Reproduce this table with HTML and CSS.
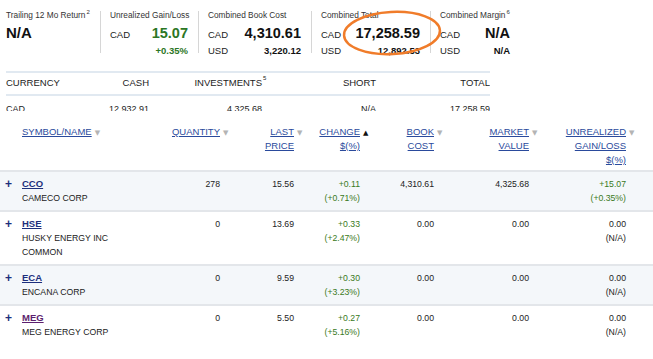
FILE: index.html
```html
<!DOCTYPE html>
<html lang="en">
<head>
  <meta charset="UTF-8" />
  <title>Holdings</title>
  <link rel="stylesheet" href="styles.css">
</head>
<body>
<div class="summary">
  <div class="box box-first">
    <div class="label">Trailing 12 Mo Return<sup>2</sup></div>
    <div class="line"><span class="big">N/A</span></div>
  </div>
  <div class="box box-gain">
    <div class="label">Unrealized Gain/Loss</div>
    <div class="line"><span class="cur">CAD</span><span class="big green">15.07</span></div>
    <div class="line small"><span></span><span class="sm green">+0.35%</span></div>
  </div>
  <div class="box box-book">
    <div class="label">Combined Book Cost</div>
    <div class="line"><span class="cur">CAD</span><span class="big">4,310.61</span></div>
    <div class="line small"><span class="cur">USD</span><span class="sm">3,220.12</span></div>
  </div>
  <div class="box box-total">
    <div class="label">Combined Total</div>
    <div class="line"><span class="cur">CAD</span><span class="big">17,258.59</span></div>
    <div class="line small"><span class="cur">USD</span><span class="sm">12,892.53</span></div>
  </div>
  <div class="box box-margin">
    <div class="label">Combined Margin<sup>6</sup></div>
    <div class="line"><span class="cur">CAD</span><span class="big">N/A</span></div>
    <div class="line small"><span class="cur">USD</span><span class="sm">N/A</span></div>
  </div>
  <!-- hand drawn mark over the total -->
  <svg class="circle" width="110" height="56" viewBox="0 0 110 56">
    <ellipse cx="55" cy="27" rx="48" ry="21" transform="rotate(-3 55 27)" fill="none" stroke="#f07c2a" stroke-width="2.5"/>
  </svg>
</div>

<div class="cur-wrap">
  <table class="cur-table">
    <colgroup><col style="width:74px"><col style="width:69px"><col style="width:113px"><col style="width:114px"><col style="width:114px"></colgroup>
    <tr>
      <th class="left">CURRENCY</th>
      <th>CASH</th>
      <th><span class="hd">INVESTMENTS<sup>5</sup></span></th>
      <th>SHORT</th>
      <th>TOTAL</th>
    </tr>
    <tr>
      <td class="left">CAD</td>
      <td>12,932.91</td>
      <td>4,325.68</td>
      <td>N/A</td>
      <td>17,258.59</td>
    </tr>
  </table>
</div>

<table class="holdings">
  <colgroup>
    <col style="width:20px"><col style="width:130px"><col style="width:70px"><col style="width:74px"><col style="width:66px">
    <col style="width:74px"><col style="width:95px"><col style="width:97px"><col style="width:27px">
  </colgroup>
  <thead>
    <tr>
      <th></th>
      <th class="left sym-h"><a href="#"><span class="sort">SYMBOL/NAME</span></a></th>
      <th><a href="#"><span class="sort">QUANTITY</span></a></th>
      <th><a href="#"><span class="sort">LAST</span><br>PRICE</a></th>
      <th><a href="#"><span class="sort up">CHANGE</span><br>$(%)</a></th>
      <th><a href="#"><span class="sort">BOOK</span><br>COST</a></th>
      <th><a href="#"><span class="sort">MARKET</span><br>VALUE</a></th>
      <th><a href="#"><span class="sort">UNREALIZED</span><br>GAIN/LOSS<br>$(%)</a></th>
      <th></th>
    </tr>
  </thead>
  <tbody>
    <tr class="alt">
      <td class="plus">+</td>
      <td class="sym"><a href="#">CCO</a><span class="name">CAMECO CORP</span></td>
      <td>278</td>
      <td>15.56</td>
      <td class="green">+0.11<br>(+0.71%)</td>
      <td>4,310.61</td>
      <td>4,325.68</td>
      <td class="green">+15.07<br>(+0.35%)</td>
      <td></td>
    </tr>
    <tr>
      <td class="plus">+</td>
      <td class="sym"><a href="#">HSE</a><span class="name">HUSKY ENERGY INC<br>COMMON</span></td>
      <td>0</td>
      <td>13.69</td>
      <td class="green">+0.33<br>(+2.47%)</td>
      <td>0.00</td>
      <td>0.00</td>
      <td>0.00<br>(N/A)</td>
      <td></td>
    </tr>
    <tr class="alt">
      <td class="plus">+</td>
      <td class="sym"><a href="#">ECA</a><span class="name">ENCANA CORP</span></td>
      <td>0</td>
      <td>9.59</td>
      <td class="green">+0.30<br>(+3.23%)</td>
      <td>0.00</td>
      <td>0.00</td>
      <td>0.00<br>(N/A)</td>
      <td></td>
    </tr>
    <tr>
      <td class="plus">+</td>
      <td class="sym"><a href="#" class="visited">MEG</a><span class="name">MEG ENERGY CORP</span></td>
      <td>0</td>
      <td>5.50</td>
      <td class="green">+0.27<br>(+5.16%)</td>
      <td>0.00</td>
      <td>0.00</td>
      <td>0.00<br>(N/A)</td>
      <td></td>
    </tr>
  </tbody>
</table>
</body>
</html>
```

FILE: styles.css
```css
body {
  margin: 0;
  font-family: 'Liberation Sans', Arial, sans-serif;
  color: #222;
  background: #fff;
}

sup {
  font-size: 6px;
  line-height: 0;
  vertical-align: 4px;
  margin-left: 1px;
}

/* summary boxes */
.summary {
  position: relative;
  display: flex;
  padding: 11px 0 0 6px;
}
.box {
  box-sizing: border-box;
  padding: 0 10px 0 9px;
  border-left: 1px solid #d6d6d6;
  height: 42px;
}
.box-first {
  width: 94px;
  padding: 0;
  border-left: none;
}
.box-gain { width: 98px; }
.box-book { width: 113px; }
.box-total { width: 119px; }
.box-margin { width: 90px; }

.label {
  font-size: 8.3px;
  line-height: 8px;
  color: #333;
  white-space: nowrap;
}
.line {
  display: flex;
  justify-content: space-between;
  align-items: baseline;
  line-height: 20px;
  margin-top: 4px;
}
.line.small {
  line-height: 12px;
  margin-top: 0;
}
.cur {
  font-size: 9.5px;
  color: #222;
}
.big {
  font-size: 14.5px;
  font-weight: bold;
  color: #111;
}
.box-first .big {
  font-size: 15px;
}
.sm {
  font-size: 9.5px;
  font-weight: bold;
  color: #111;
}
.summary .green {
  color: #2b7625;
}
.circle {
  position: absolute;
  left: 337px;
  top: 6px;
}

/* currency table, cut off by its box */
.cur-wrap {
  margin: 18px 0 0 6px;
  width: 484px;
  height: 40px;
  overflow: hidden;
}
.cur-table {
  width: 100%;
  border-collapse: collapse;
  table-layout: fixed;
  font-size: 9.5px;
}
.cur-table th {
  font-weight: normal;
  text-align: right;
  line-height: 12px;
  padding: 4px 0 5px;
  border-top: 2px solid #e1e9f1;
  border-bottom: 2px solid #e1e9f1;
}
.cur-table td {
  text-align: right;
  line-height: 12px;
  padding: 7px 0 0;
  font-size: 9px;
}
.cur-table .left {
  text-align: left;
}
.hd {
  position: relative;
}
.hd sup {
  position: absolute;
  left: 100%;
  top: 1px;
}

/* holdings table */
.holdings {
  width: 653px;
  margin-top: 14px;
  border-collapse: collapse;
  table-layout: fixed;
}
.holdings th {
  font-weight: normal;
  font-size: 9.5px;
  line-height: 14px;
  text-align: right;
  vertical-align: top;
  padding: 0 0 3px;
  border-bottom: 2px solid #e3e6ea;
}
.holdings th a {
  color: #2a4a9c;
  text-decoration: underline;
}
.holdings th.sym-h {
  text-align: left;
  padding-left: 2px;
}
.sort {
  position: relative;
}
.sort::after {
  content: "\25BC";
  position: absolute;
  left: 100%;
  top: 0;
  margin-left: 3px;
  font-family: 'DejaVu Sans', sans-serif;
  font-size: 7px;
  color: #b4b4b4;
}
.sort.up::after {
  content: "\25B2";
  color: #111;
}

.holdings td {
  font-size: 8.7px;
  line-height: 14px;
  text-align: right;
  vertical-align: top;
  padding: 5px 0 5px;
  border-bottom: 2px solid #e3e6ea;
  white-space: nowrap;
}
.holdings tr:last-child td {
  border-bottom: none;
}
.holdings tr.alt td {
  background: #f4f7fa;
}
.holdings td.green {
  color: #3a7a22;
}
.holdings td.plus {
  text-align: left;
  padding-left: 5px;
  font-size: 12px;
  font-weight: bold;
  color: #1d2f7c;
}
.holdings td.sym {
  text-align: left;
  padding-left: 2px;
}
.sym a {
  display: block;
  font-size: 9.5px;
  font-weight: bold;
  color: #1d2f7c;
  text-decoration: underline;
}
.sym a.visited {
  color: #5c1f6e;
}
.name {
  display: block;
}
```
